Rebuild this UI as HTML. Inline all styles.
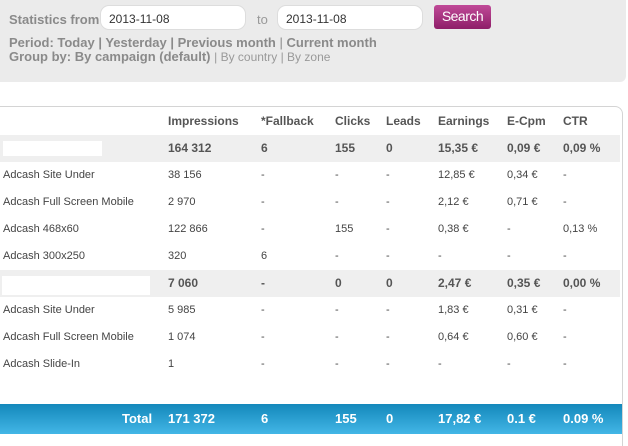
<!DOCTYPE html>
<html><head><meta charset="utf-8"><style>
body{margin:0;width:628px;height:440px;background:#fff;font-family:"Liberation Sans",sans-serif;font-size:11px;color:#444;position:relative;overflow:hidden}
.a{position:absolute;white-space:nowrap}
#top{position:absolute;left:0;top:0;width:626px;height:82px;background:#ebebeb;border-bottom-right-radius:6px}
.inp{position:absolute;top:5px;height:25px;width:146px;background:#fff;border:1px solid #ddd;border-radius:9px;box-sizing:border-box;font-family:"Liberation Sans",sans-serif;font-size:12px;color:#333;padding:6px 0 0 8px}
.lbl{font-family:"Liberation Sans",sans-serif;font-weight:bold;font-size:13px;color:#8a8a8a}
#panel{position:absolute;left:0;top:106px;width:623px;height:340px;border-top:1px solid #d4d4d4;border-right:1px solid #d4d4d4;border-top-right-radius:8px;box-sizing:border-box}
.band{position:absolute;left:0;width:620px;height:27px;background:#efefef}
.b{font-weight:bold;color:#555;font-size:12px;margin-top:-1px}
.wb{position:absolute;background:#fff}
#tot{position:absolute;left:0;top:404px;width:622px;height:30px;background:linear-gradient(#1388bb,#43b6e6)}
.t{color:#fff;font-weight:bold;font-size:13px;top:411px}
</style></head><body>
<div id="top"></div>
<div class="a lbl" style="left:9px;top:12px">Statistics from</div>
<div class="inp" style="left:100px">2013-11-08</div>
<div class="a" style="left:257px;top:12px;font-family:'Liberation Sans';font-size:13px;color:#999">to</div>
<div class="inp" style="left:277px">2013-11-08</div>
<div class="a" style="left:434px;top:5px;width:57px;height:24px;background:linear-gradient(#c04a98,#8e1e68);border-radius:3px;color:#fff;font-family:'Liberation Sans';font-size:14px;text-align:center;line-height:23px;letter-spacing:-0.5px">Search</div>
<div class="a lbl" style="left:9px;top:35px">Period: Today | Yesterday | Previous month <span style="font-weight:normal">|</span> Current month</div>
<div class="a lbl" style="left:9px;top:49px">Group by: By campaign (default) <span style="font-weight:normal;font-size:12px;color:#999">| By country | By zone</span></div>
<div id="panel"></div>
<div class="band" style="top:135px"></div>
<div class="band" style="top:270px"></div>
<div class="wb" style="left:3px;top:141px;width:99px;height:15px"></div>
<div class="wb" style="left:2px;top:276px;width:148px;height:19px"></div>
<div class="a b" style="left:168px;top:115px">Impressions</div>
<div class="a b" style="left:261px;top:115px">*Fallback</div>
<div class="a b" style="left:335px;top:115px">Clicks</div>
<div class="a b" style="left:386px;top:115px">Leads</div>
<div class="a b" style="left:438px;top:115px">Earnings</div>
<div class="a b" style="left:507px;top:115px">E-Cpm</div>
<div class="a b" style="left:563px;top:115px">CTR</div>

<div class="a b" style="left:168px;top:142px">164 312</div><div class="a b" style="left:261px;top:142px">6</div><div class="a b" style="left:335px;top:142px">155</div><div class="a b" style="left:386px;top:142px">0</div><div class="a b" style="left:438px;top:142px">15,35 €</div><div class="a b" style="left:507px;top:142px">0,09 €</div><div class="a b" style="left:563px;top:142px">0,09 %</div>

<div class="a" style="left:3px;top:169px">Adcash Site Under</div><div class="a" style="left:168px;top:169px">38 156</div><div class="a" style="left:261px;top:169px">-</div><div class="a" style="left:335px;top:169px">-</div><div class="a" style="left:386px;top:169px">-</div><div class="a" style="left:438px;top:169px">12,85 €</div><div class="a" style="left:507px;top:169px">0,34 €</div><div class="a" style="left:563px;top:169px">-</div>

<div class="a" style="left:3px;top:196px">Adcash Full Screen Mobile</div><div class="a" style="left:168px;top:196px">2 970</div><div class="a" style="left:261px;top:196px">-</div><div class="a" style="left:335px;top:196px">-</div><div class="a" style="left:386px;top:196px">-</div><div class="a" style="left:438px;top:196px">2,12 €</div><div class="a" style="left:507px;top:196px">0,71 €</div><div class="a" style="left:563px;top:196px">-</div>

<div class="a" style="left:3px;top:223px">Adcash 468x60</div><div class="a" style="left:168px;top:223px">122 866</div><div class="a" style="left:261px;top:223px">-</div><div class="a" style="left:335px;top:223px">155</div><div class="a" style="left:386px;top:223px">-</div><div class="a" style="left:438px;top:223px">0,38 €</div><div class="a" style="left:507px;top:223px">-</div><div class="a" style="left:563px;top:223px">0,13 %</div>

<div class="a" style="left:3px;top:250px">Adcash 300x250</div><div class="a" style="left:168px;top:250px">320</div><div class="a" style="left:261px;top:250px">6</div><div class="a" style="left:335px;top:250px">-</div><div class="a" style="left:386px;top:250px">-</div><div class="a" style="left:438px;top:250px">-</div><div class="a" style="left:507px;top:250px">-</div><div class="a" style="left:563px;top:250px">-</div>

<div class="a b" style="left:168px;top:277px">7 060</div><div class="a b" style="left:261px;top:277px">-</div><div class="a b" style="left:335px;top:277px">0</div><div class="a b" style="left:386px;top:277px">0</div><div class="a b" style="left:438px;top:277px">2,47 €</div><div class="a b" style="left:507px;top:277px">0,35 €</div><div class="a b" style="left:563px;top:277px">0,00 %</div>

<div class="a" style="left:3px;top:304px">Adcash Site Under</div><div class="a" style="left:168px;top:304px">5 985</div><div class="a" style="left:261px;top:304px">-</div><div class="a" style="left:335px;top:304px">-</div><div class="a" style="left:386px;top:304px">-</div><div class="a" style="left:438px;top:304px">1,83 €</div><div class="a" style="left:507px;top:304px">0,31 €</div><div class="a" style="left:563px;top:304px">-</div>

<div class="a" style="left:3px;top:331px">Adcash Full Screen Mobile</div><div class="a" style="left:168px;top:331px">1 074</div><div class="a" style="left:261px;top:331px">-</div><div class="a" style="left:335px;top:331px">-</div><div class="a" style="left:386px;top:331px">-</div><div class="a" style="left:438px;top:331px">0,64 €</div><div class="a" style="left:507px;top:331px">0,60 €</div><div class="a" style="left:563px;top:331px">-</div>

<div class="a" style="left:3px;top:358px">Adcash Slide-In</div><div class="a" style="left:168px;top:358px">1</div><div class="a" style="left:261px;top:358px">-</div><div class="a" style="left:335px;top:358px">-</div><div class="a" style="left:386px;top:358px">-</div><div class="a" style="left:438px;top:358px">-</div><div class="a" style="left:507px;top:358px">-</div><div class="a" style="left:563px;top:358px">-</div>

<div id="tot"></div>
<div class="a t" style="left:122px">Total</div>
<div class="a t" style="left:168px">171 372</div>
<div class="a t" style="left:261px">6</div>
<div class="a t" style="left:335px">155</div>
<div class="a t" style="left:386px">0</div>
<div class="a t" style="left:438px">17,82 €</div>
<div class="a t" style="left:507px">0.1 €</div>
<div class="a t" style="left:563px">0.09 %</div>
</body></html>
